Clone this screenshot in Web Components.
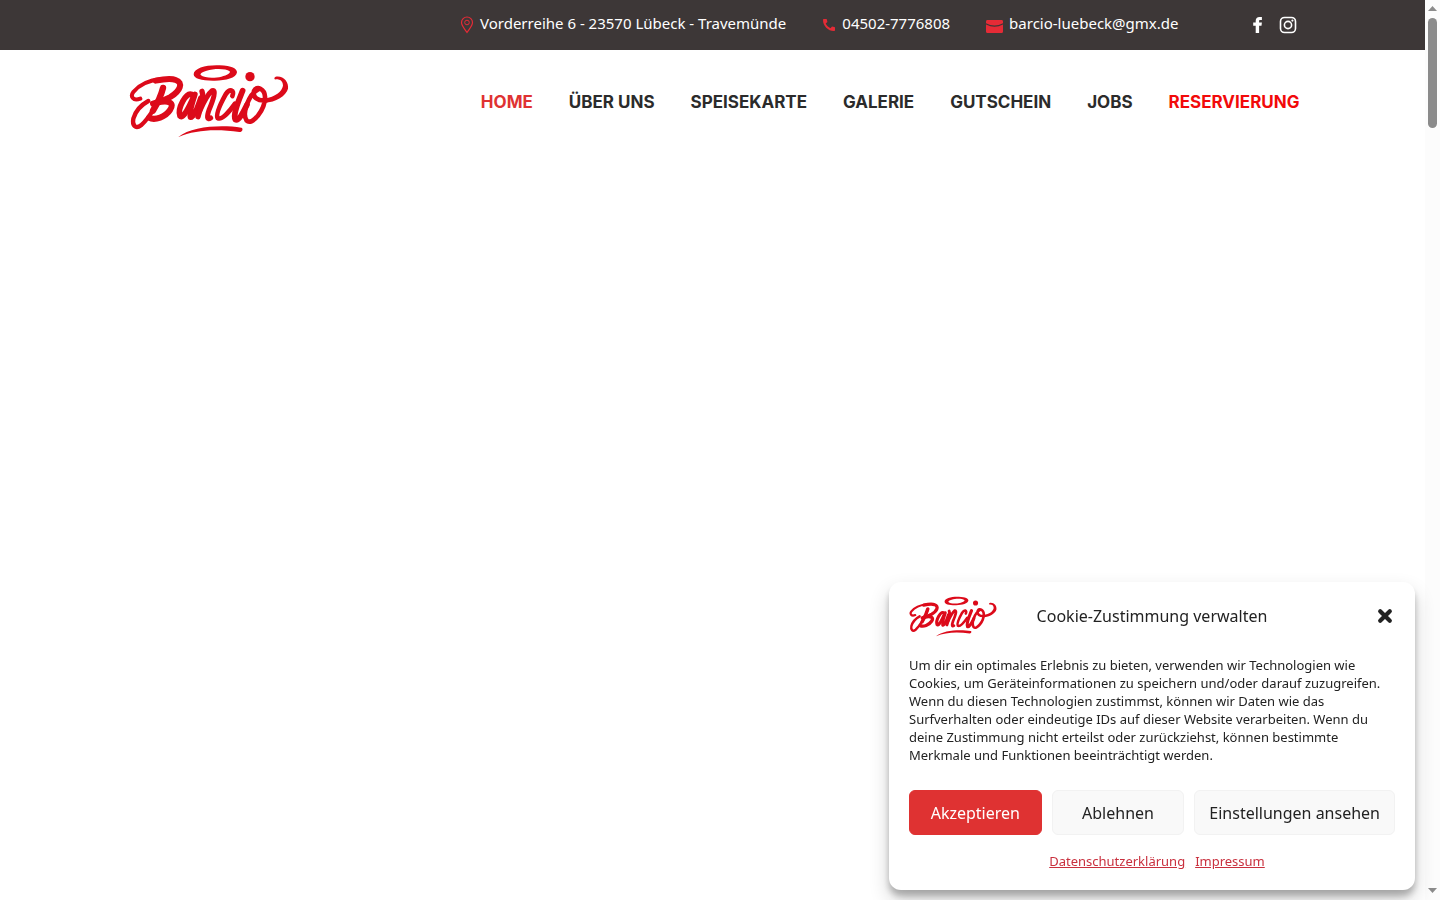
<!DOCTYPE html>
<html lang="de">
<head>
<meta charset="utf-8">
<meta name="viewport" content="width=device-width, initial-scale=1">
<title>Barcio</title>
<style>
  body {
    margin: 0;
    --brand-red: #df3232;
    --bar-bg: #3d3737;
    --text: #222222;
    --font-body: "Noto Sans", "Open Sans", sans-serif;
    --font-nav: Inter, "Open Sans", sans-serif;
    font-family: var(--font-body);
    color: var(--text);
    background: #ffffff;
  }
</style>
</head>
<body>
<barcio-page>
  <top-bar slot="header">
    <contact-link icon="pin" href="#karte">Vorderreihe 6 - 23570 Lübeck - Travemünde</contact-link>
    <contact-link icon="phone" href="tel:045027776808">04502-7776808</contact-link>
    <contact-link icon="mail" href="mailto:barcio-luebeck@gmx.de">barcio-luebeck@gmx.de</contact-link>
    <social-links slot="social"></social-links>
  </top-bar>
  <main-header slot="header">
    <nav-item href="#home" variant="active">HOME</nav-item>
    <nav-item href="#ueber-uns">ÜBER UNS</nav-item>
    <nav-item href="#speisekarte">SPEISEKARTE</nav-item>
    <nav-item href="#galerie">GALERIE</nav-item>
    <nav-item href="#gutschein">GUTSCHEIN</nav-item>
    <nav-item href="#jobs">JOBS</nav-item>
    <nav-item href="#reservierung" variant="highlight">RESERVIERUNG</nav-item>
  </main-header>
  <cookie-banner slot="overlay" heading="Cookie-Zustimmung verwalten">
    Um dir ein optimales Erlebnis zu bieten, verwenden wir Technologien wie Cookies, um Geräteinformationen zu speichern und/oder darauf zuzugreifen. Wenn du diesen Technologien zustimmst, können wir Daten wie das Surfverhalten oder eindeutige IDs auf dieser Website verarbeiten. Wenn du deine Zustimmung nicht erteilst oder zurückziehst, können bestimmte Merkmale und Funktionen beeinträchtigt werden.
    <cookie-button slot="actions" variant="primary">Akzeptieren</cookie-button>
    <cookie-button slot="actions">Ablehnen</cookie-button>
    <cookie-button slot="actions">Einstellungen ansehen</cookie-button>
    <cookie-link slot="links" href="#datenschutz">Datenschutzerklärung</cookie-link>
    <cookie-link slot="links" href="#impressum">Impressum</cookie-link>
  </cookie-banner>
</barcio-page>

<script>
const ICONS = {
  pin: '<svg width="14" height="18" viewBox="0 0 14 18" fill="none" stroke="currentColor"><path d="M7 16.500C4.500 12.700 1.500 9.500 1.500 6.500a5.500 5.500 0 0 1 11 0C12.500 9.500 9.500 12.700 7 16.500z" stroke-width="1.200"/><circle cx="7" cy="6.500" r="2.300"/></svg>',
  phone: '<svg width="14" height="14" viewBox="0 0 14 14" fill="currentColor"><path d="M1 2C1 1.400 1.500 1 2 1h2.200c.4 0 .6.200.7.600l.5 2.300-1.700 1.600c1 2.200 2.600 3.700 4.800 4.700L10 8.600l2.400.5c.4.100.6.300.6.700V12c0 .6-.5 1-1 1C6 13 1 8 1 2z"/></svg>',
  mail: '<svg width="17" height="16" viewBox="0 -3 17 16" fill="currentColor"><path d="M1.500 0h14C16.500 0 17 .6 17 1.500v1.700Q8.500 8 0 3.200V1.500C0 .6.500 0 1.500 0z"/><path d="M0 4.400Q8.500 9 17 4.400v7.100c0 .9-.5 1.500-1.500 1.500h-14C.5 13 0 12.400 0 11.500z"/></svg>'
};

class BarcioLogo extends HTMLElement {
  constructor() {
    super();
    this.attachShadow({ mode: 'open' });
  }
  connectedCallback() {
    this.shadowRoot.innerHTML = `
      <style>
        :host { display: block; width: var(--logo-width, 160px); color: #dc0a1a; }
        svg { display: block; width: 100%; height: auto; }
      </style>
      <svg viewBox="28 26 480 226" role="img" aria-label="Barcio" fill="none" stroke="currentColor" stroke-linecap="round" stroke-linejoin="round">
        <path d="M222 57C222 38 262 28 300 30C337 31 352 40 352 51C350 69 315 77 280 76C245 76 222 70 222 57zM243 59C254 69 285 69 305 64C323 60 334 53 330 48C318 39 282 40 261 46C248 50 241 54 243 59z" fill="currentColor" stroke="none" fill-rule="evenodd"/>
        <circle cx="391" cy="64" r="14" fill="currentColor" stroke="none"/>
        <path d="M62 130C40 139 31 123 41 110C60 86 95 74 125 71" stroke-width="12"/>
        <path d="M108 76C132 71 156 69 168 74C192 82 182 107 152 125C134 135 115 141 100 145" stroke-width="18"/>
        <path d="M132 95C122 130 92 186 64 210C47 223 37 209 41 190C47 168 64 149 86 137" stroke-width="13"/>
        <path d="M130 98C124 122 112 146 100 166" stroke-width="19"/>
        <path d="M112 142C148 134 166 142 151 164C138 184 106 197 88 187" stroke-width="18"/>
        <path d="M216 117C200 110 172 158 181 182C190 193 210 152 222 124" stroke-width="17"/>
        <path d="M226 117C217 145 208 172 212 186C221 189 232 160 243 128" stroke-width="16"/>
        <path d="M247 108C253 122 248 142 240 166L235 184" stroke-width="16"/>
        <path d="M240 168C252 140 264 116 277 106C292 102 280 135 268 164C261 184 262 196 273 188" stroke-width="15"/>
        <path d="M338 122C346 103 330 99 318 117C302 146 288 178 294 188C306 196 330 168 346 145" stroke-width="14"/>
        <path d="M369 106C357 136 339 176 347 193C357 199 370 172 382 148" stroke-width="17"/>
        <path d="M414 103C389 116 365 173 381 196C397 212 437 164 436 124C435 101 411 89 403 107C398 126 414 138 440 135" stroke-width="14"/>
        <path d="M435 129C467 125 487 108 490 91C490 78 482 72 470 72C463 74 462 66 468 64C491 60 508 80 505 100C500 121 468 141 435 142z" fill="currentColor" stroke="none"/>
        <path d="M175 246C217 211 307 209 365 217C372 219 368 231 359 230C293 221 228 222 175 246z" fill="currentColor" stroke="none"/>
      </svg>
    `;
  }
}
customElements.define('barcio-logo', BarcioLogo);

class ContactLink extends HTMLElement {
  constructor() {
    super();
    this.attachShadow({ mode: 'open' });
  }
  connectedCallback() {
    const icon = ICONS[this.getAttribute('icon')] || '';
    this.shadowRoot.innerHTML = `
      <style>
        :host { display: block; }
        a {
          display: flex;
          align-items: center;
          gap: 6px;
          color: #ffffff;
          font-size: 15px;
          line-height: 24px;
          white-space: nowrap;
          text-decoration: none;
        }
        .icon { display: flex; padding-top: 4px; color: #e52b36; }
      </style>
      <a href="${this.getAttribute('href')}"><span class="icon">${icon}</span><slot></slot></a>
    `;
  }
}
customElements.define('contact-link', ContactLink);

class SocialLinks extends HTMLElement {
  constructor() {
    super();
    this.attachShadow({ mode: 'open' });
  }
  connectedCallback() {
    this.shadowRoot.innerHTML = `
      <style>
        :host { display: flex; align-items: center; gap: 12px; }
        a { display: flex; color: #ffffff; }
      </style>
      <a href="#facebook" aria-label="Facebook">
        <svg width="18" height="18" viewBox="0 0 18 18" fill="currentColor"><path d="M6.700 17V9.700H4.200V6.500h2.500V4.800C6.700 2.400 8.100 1 10.500 1h2.400v3.100h-1.700c-.8 0-1.100.3-1.100 1.100v1.300h2.800l-.4 3.200h-2.400V17z"/></svg>
      </a>
      <a href="#instagram" aria-label="Instagram">
        <svg width="18" height="18" viewBox="0 0 18 18" fill="none" stroke="currentColor" stroke-width="1.600"><rect x="1.500" y="1.500" width="15" height="15" rx="4"/><circle cx="9" cy="9" r="3.600"/><circle cx="13.400" cy="4.600" r="1.100" fill="currentColor" stroke="none"/></svg>
      </a>
    `;
  }
}
customElements.define('social-links', SocialLinks);

class TopBar extends HTMLElement {
  constructor() {
    super();
    this.attachShadow({ mode: 'open' });
  }
  connectedCallback() {
    this.shadowRoot.innerHTML = `
      <style>
        :host { display: block; background: var(--bar-bg); }
        .inner {
          display: flex;
          justify-content: flex-end;
          align-items: center;
          gap: 70px;
          max-width: 1168px;
          min-height: 50px;
          margin: 0 auto;
        }
        .contacts { display: flex; gap: 36px; padding-bottom: 4px; }
      </style>
      <div class="inner">
        <div class="contacts"><slot></slot></div>
        <slot name="social"></slot>
      </div>
    `;
  }
}
customElements.define('top-bar', TopBar);

class NavItem extends HTMLElement {
  constructor() {
    super();
    this.attachShadow({ mode: 'open' });
  }
  connectedCallback() {
    this.shadowRoot.innerHTML = `
      <style>
        :host { display: block; color: #2b2b2b; }
        :host([variant="active"]) { color: var(--brand-red); }
        :host([variant="highlight"]) { color: #f20a0a; }
        a {
          color: inherit;
          font-family: var(--font-nav);
          font-size: 17px;
          font-weight: 700;
          line-height: 24px;
          white-space: nowrap;
          text-decoration: none;
        }
      </style>
      <a href="${this.getAttribute('href')}"><slot></slot></a>
    `;
  }
}
customElements.define('nav-item', NavItem);

class MainHeader extends HTMLElement {
  constructor() {
    super();
    this.attachShadow({ mode: 'open' });
  }
  connectedCallback() {
    this.shadowRoot.innerHTML = `
      <style>
        :host { display: block; }
        .inner {
          display: flex;
          justify-content: space-between;
          align-items: center;
          box-sizing: border-box;
          max-width: 1174px;
          margin: 0 auto;
          padding: 14px 0 14px 3px;
        }
        nav { display: flex; gap: 36px; }
      </style>
      <div class="inner">
        <barcio-logo></barcio-logo>
        <nav><slot></slot></nav>
      </div>
    `;
  }
}
customElements.define('main-header', MainHeader);

class CookieButton extends HTMLElement {
  constructor() {
    super();
    this.attachShadow({ mode: 'open' });
  }
  connectedCallback() {
    this.shadowRoot.innerHTML = `
      <style>
        :host { display: block; flex: 1 1 0; }
        button {
          width: 100%;
          height: 45px;
          padding: 0 14px;
          border: 1px solid #f2f2f2;
          border-radius: 6px;
          background: #f9f9f9;
          color: var(--text);
          font: 16px/24px var(--font-body);
          white-space: nowrap;
          cursor: pointer;
        }
        :host([variant="primary"]) button {
          border-color: var(--brand-red);
          background: var(--brand-red);
          color: #ffffff;
        }
      </style>
      <button type="button"><slot></slot></button>
    `;
  }
}
customElements.define('cookie-button', CookieButton);

class CookieLink extends HTMLElement {
  constructor() {
    super();
    this.attachShadow({ mode: 'open' });
  }
  connectedCallback() {
    this.shadowRoot.innerHTML = `
      <style>
        :host { display: block; font-size: 13px; line-height: 18px; }
        a { color: #c9303e; text-decoration: underline; }
      </style>
      <a href="${this.getAttribute('href')}"><slot></slot></a>
    `;
  }
}
customElements.define('cookie-link', CookieLink);

class CookieBanner extends HTMLElement {
  constructor() {
    super();
    this.attachShadow({ mode: 'open' });
  }
  connectedCallback() {
    this.shadowRoot.innerHTML = `
      <style>
        :host {
          display: block;
          box-sizing: border-box;
          width: 526px;
          max-width: 100%;
          padding: 14px 20px 20px;
          border-radius: 12px;
          background: #ffffff;
          box-shadow: 0 10px 20px rgba(0, 0, 0, 0.19), 0 6px 6px rgba(0, 0, 0, 0.23);
        }
        header {
          display: grid;
          grid-template-columns: 90px 1fr 90px;
          align-items: center;
        }
        barcio-logo { --logo-width: 88px; }
        h2 {
          margin: 0;
          font-size: 16px;
          font-weight: 400;
          line-height: 24px;
          text-align: center;
        }
        .close {
          display: flex;
          justify-self: end;
          padding: 2px;
          border: 0;
          background: none;
          color: var(--text);
          cursor: pointer;
        }
        p { margin: 19px 0 26px; font-size: 13px; line-height: 18px; }
        .actions { display: flex; gap: 10px; }
        .links { display: flex; justify-content: center; gap: 10px; margin: 17px 0 0 10px; }
      </style>
      <header>
        <barcio-logo></barcio-logo>
        <h2>${this.getAttribute('heading')}</h2>
        <button class="close" type="button" aria-label="Schließen">
          <svg width="16" height="16" viewBox="0 0 16 16" stroke="currentColor" stroke-width="4.200" stroke-linecap="round"><path d="M3.200 3.200l9.600 9.600M12.800 3.200l-9.600 9.600"/></svg>
        </button>
      </header>
      <p><slot></slot></p>
      <div class="actions"><slot name="actions"></slot></div>
      <div class="links"><slot name="links"></slot></div>
    `;
  }
}
customElements.define('cookie-banner', CookieBanner);

class ScrollRail extends HTMLElement {
  constructor() {
    super();
    this.attachShadow({ mode: 'open' });
  }
  connectedCallback() {
    this.shadowRoot.innerHTML = `
      <style>
        :host {
          display: flex;
          flex-direction: column;
          align-items: center;
          gap: 6px;
          box-sizing: border-box;
          padding: 6px 0;
          background: #fcfcfc;
          color: #8b8b8b;
        }
        svg { display: block; }
        .track { flex: 1; }
        .thumb { width: 9px; height: 110px; border-radius: 5px; background: currentColor; }
      </style>
      <svg width="9" height="6" viewBox="0 0 9 6" fill="currentColor"><path d="M0 5l4.500-5L9 5z"/></svg>
      <div class="track"><div class="thumb"></div></div>
      <svg width="9" height="6" viewBox="0 0 9 6" fill="currentColor"><path d="M0 0h9L4.500 5z"/></svg>
    `;
  }
}
customElements.define('scroll-rail', ScrollRail);

class BarcioPage extends HTMLElement {
  constructor() {
    super();
    this.attachShadow({ mode: 'open' });
  }
  connectedCallback() {
    this.shadowRoot.innerHTML = `
      <style>
        :host { display: grid; grid-template-columns: 1fr 15px; height: 100vh; }
        .overlay { position: fixed; right: 25px; bottom: 10px; }
      </style>
      <div class="content"><slot name="header"></slot></div>
      <scroll-rail></scroll-rail>
      <div class="overlay"><slot name="overlay"></slot></div>
    `;
  }
}
customElements.define('barcio-page', BarcioPage);
</script>
</body>
</html>
